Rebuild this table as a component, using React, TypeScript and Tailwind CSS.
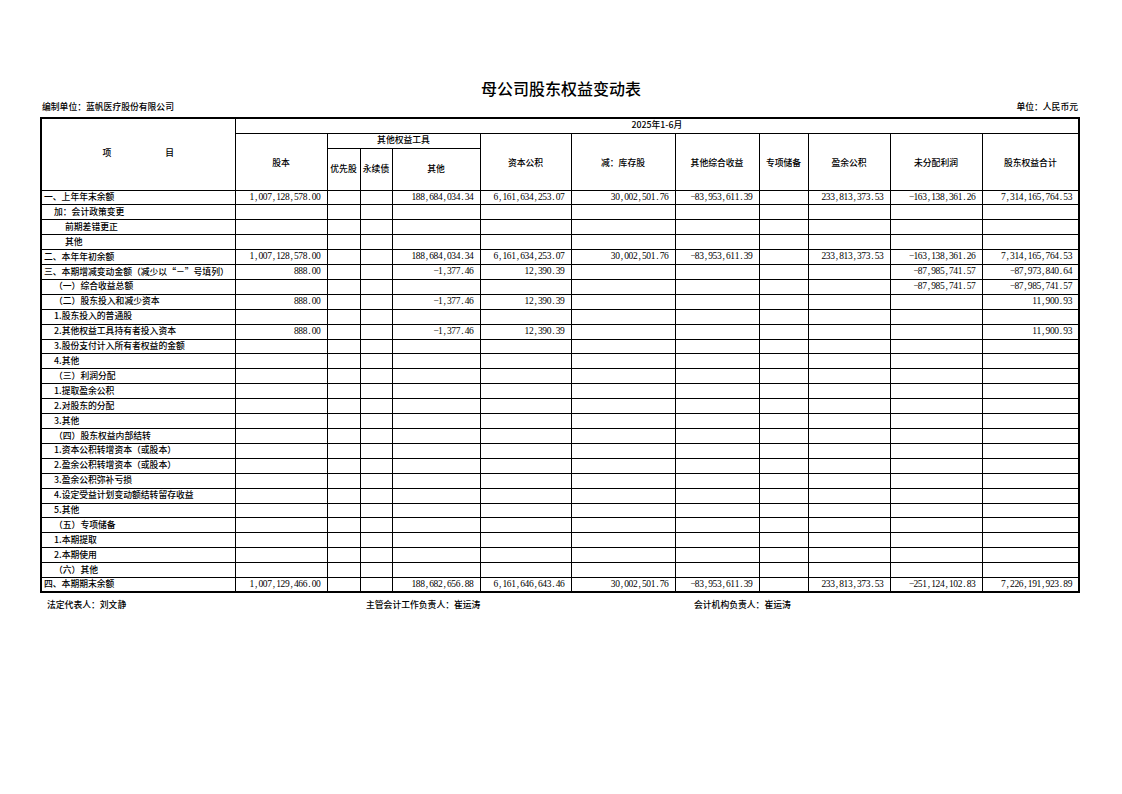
import React from "react";

type Row = { label: string; level: 0 | 1 | 2; v?: string[] };

const R1 = [
  "1,007,128,578.00", "", "", "188,684,034.34", "6,161,634,253.07", "30,002,501.76",
  "-83,953,611.39", "", "233,813,373.53", "-163,138,361.26", "7,314,165,764.53",
];
const R3 = ["888.00", "", "", "-1,377.46", "12,390.39", "", "", "", "", "-87,985,741.57", "-87,973,840.64"];
const RA = ["", "", "", "", "", "", "", "", "", "-87,985,741.57", "-87,985,741.57"];
const RB = ["888.00", "", "", "-1,377.46", "12,390.39", "", "", "", "", "", "11,900.93"];
const R4 = [
  "1,007,129,466.00", "", "", "188,682,656.88", "6,161,646,643.46", "30,002,501.76",
  "-83,953,611.39", "", "233,813,373.53", "-251,124,102.83", "7,226,191,923.89",
];

const rows: Row[] = [
  { label: "一、上年年末余额", level: 0, v: R1 },
  { label: "加：会计政策变更", level: 1 },
  { label: "前期差错更正", level: 2 },
  { label: "其他", level: 2 },
  { label: "二、本年年初余额", level: 0, v: R1 },
  { label: "三、本期增减变动金额（减少以“－”号填列）", level: 0, v: R3 },
  { label: "（一）综合收益总额", level: 1, v: RA },
  { label: "（二）股东投入和减少资本", level: 1, v: RB },
  { label: "1.股东投入的普通股", level: 1 },
  { label: "2.其他权益工具持有者投入资本", level: 1, v: RB },
  { label: "3.股份支付计入所有者权益的金额", level: 1 },
  { label: "4.其他", level: 1 },
  { label: "（三）利润分配", level: 1 },
  { label: "1.提取盈余公积", level: 1 },
  { label: "2.对股东的分配", level: 1 },
  { label: "3.其他", level: 1 },
  { label: "（四）股东权益内部结转", level: 1 },
  { label: "1.资本公积转增资本（或股本）", level: 1 },
  { label: "2.盈余公积转增资本（或股本）", level: 1 },
  { label: "3.盈余公积弥补亏损", level: 1 },
  { label: "4.设定受益计划变动额结转留存收益", level: 1 },
  { label: "5.其他", level: 1 },
  { label: "（五）专项储备", level: 1 },
  { label: "1.本期提取", level: 1 },
  { label: "2.本期使用", level: 1 },
  { label: "（六）其他", level: 1 },
  { label: "四、本期期末余额", level: 0, v: R4 },
];

const widths = [194, 92, 33, 32, 88, 91, 104, 84, 49, 82, 92, 97];

const cjk = "font-['Noto_Sans_CJK_SC','Noto_Sans_CJK_JP',sans-serif]";

function Num({ s }: { s: string }) {
  return (
    <span className="inline-flex font-['Liberation_Serif',serif] text-[9.5px] leading-none">
      {s.split("").map((c, i) => (
        <span key={i} className="inline-block w-[4.45px] text-center">
          {c === "-" ? "−" : c}
        </span>
      ))}
    </span>
  );
}

export default function App() {
  const indent = ["pl-[2px]", "pl-[12px]", "pl-[23px]"];
  return (
    <div className={`w-[1122px] h-[794px] bg-white text-black ${cjk} text-[8.8px] leading-none font-medium`}>
      <div className="pt-[78px] h-[98px] text-center text-[16px] leading-[20px] font-medium">
        母公司股东权益变动表
      </div>
      <div className="mt-[3px] h-[12px] leading-[12px] flex justify-between pl-[42px] pr-[44px]">
        <span>编制单位：蓝帆医疗股份有限公司</span>
        <span>单位：人民币元</span>
      </div>
      <table className="mt-[4px] ml-[40px] table-fixed border-collapse border-2 border-black w-[1038px]">
        <colgroup>
          {widths.map((w, i) => (
            <col key={i} style={{ width: w }} />
          ))}
        </colgroup>
        <thead>
          <tr className="h-[15px]">
            <th rowSpan={3} className="border border-black font-medium p-0">
              <div className="flex justify-center gap-[54px] pb-[1px]">
                <span>项</span>
                <span>目</span>
              </div>
            </th>
            <th colSpan={11} className="border border-black font-medium p-0 text-center">
              2025年1-6月
            </th>
          </tr>
          <tr className="h-[15px]">
            <th rowSpan={2} className="border border-black font-medium p-0 pt-[4px]">股本</th>
            <th colSpan={3} className="border border-black font-medium p-0">其他权益工具</th>
            <th rowSpan={2} className="border border-black font-medium p-0 pt-[4px]">资本公积</th>
            <th rowSpan={2} className="border border-black font-medium p-0 pt-[4px]">减：库存股</th>
            <th rowSpan={2} className="border border-black font-medium p-0 pt-[4px]">其他综合收益</th>
            <th rowSpan={2} className="border border-black font-medium p-0 pt-[4px]">专项储备</th>
            <th rowSpan={2} className="border border-black font-medium p-0 pt-[4px]">盈余公积</th>
            <th rowSpan={2} className="border border-black font-medium p-0 pt-[4px]">未分配利润</th>
            <th rowSpan={2} className="border border-black font-medium p-0 pt-[4px]">股东权益合计</th>
          </tr>
          <tr className="h-[42px]">
            <th className="border border-black font-medium p-0">优先股</th>
            <th className="border border-black font-medium p-0">永续债</th>
            <th className="border border-black font-medium p-0">其他</th>
          </tr>
        </thead>
        <tbody>
          {rows.map((r, i) => (
            <tr key={i} className="h-[14.92px]">
              <td className={`border border-black p-0 ${indent[r.level]} whitespace-nowrap overflow-hidden`}>
                {r.label}
              </td>
              {Array.from({ length: 11 }).map((_, j) => (
                <td key={j} className="border border-black p-0 pr-[6px] text-right whitespace-nowrap">
                  {r.v && r.v[j] ? <Num s={r.v[j]} /> : null}
                </td>
              ))}
            </tr>
          ))}
        </tbody>
      </table>
      <div className="mt-[6px] h-[12px] leading-[12px] flex">
        <span className="ml-[47px] w-[319px]">法定代表人：刘文静</span>
        <span className="w-[328px]">主管会计工作负责人：崔运涛</span>
        <span>会计机构负责人：崔运涛</span>
      </div>
    </div>
  );
}
